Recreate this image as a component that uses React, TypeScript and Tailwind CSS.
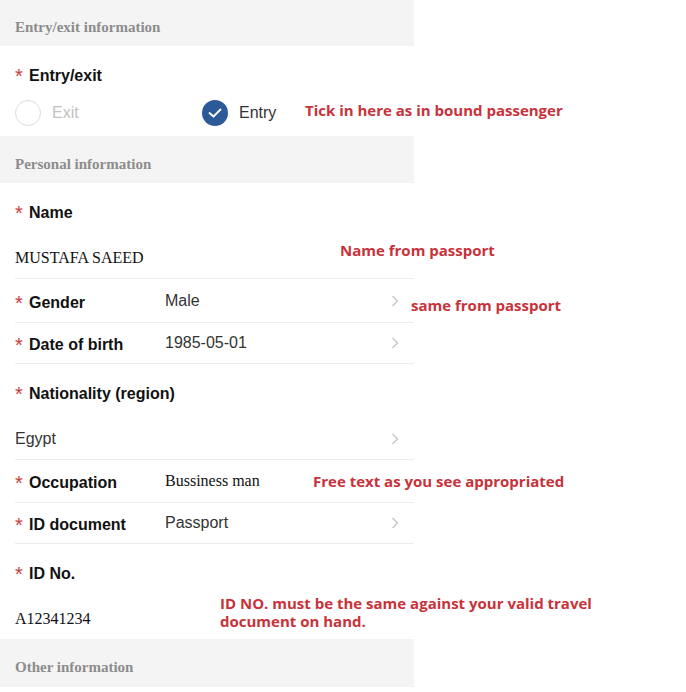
import type { ReactNode } from "react";

const sans = { fontFamily: '"Liberation Sans", Arial, sans-serif' };
const serif = { fontFamily: '"Liberation Serif", "Times New Roman", serif' };
const note = { fontFamily: '"Open Sans", "Noto Sans", sans-serif' };

function SectionHeader({ title, className = "h-[47px]" }: { title: string; className?: string }) {
  return (
    <div className={`flex items-center bg-[#f4f4f4] pl-[15px] pt-[9px] ${className}`}>
      <span style={serif} className="text-[15px] font-bold text-[#8c8c8c]">
        {title}
      </span>
    </div>
  );
}

function Label({ children }: { children: ReactNode }) {
  return (
    <div className="flex h-[22px] items-center text-[16px] font-bold leading-[22px] text-[#111]" style={sans}>
      <span className="w-[14px] translate-y-[1px] self-start text-[20px] font-normal leading-[20px] text-[#cc3b3b]">*</span>
      <span>{children}</span>
    </div>
  );
}

function Chevron() {
  return (
    <svg width="8" height="12" viewBox="0 0 8 12" className="shrink-0">
      <polyline points="1.5,1 6.5,6 1.5,11" fill="none" stroke="#c4c4c4" strokeWidth="1.3" />
    </svg>
  );
}

function InlineRow({ label, value, valueSerif, chevron, h = "h-[43px]" }: { label: string; value: string; valueSerif?: boolean; chevron?: boolean; h?: string }) {
  return (
    <div className={`ml-[15px] flex items-center border-b border-[#ececec] pr-[15px] ${h}`}>
      <div className="w-[150px] pt-[4px]">
        <Label>{label}</Label>
      </div>
      <div
        style={valueSerif ? serif : sans}
        className={`flex-1 ${valueSerif ? "text-[16px] text-[#111]" : "text-[16px] text-[#333]"}`}
      >
        {value}
      </div>
      {chevron ? <Chevron /> : null}
    </div>
  );
}

function StackedRow({ label, value, valueSerif, chevron, border = true }: { label: string; value: string; valueSerif?: boolean; chevron?: boolean; border?: boolean }) {
  return (
    <div className={`ml-[15px] flex flex-col pt-[19px] pr-[15px] pb-[9px] ${border ? "border-b border-[#ececec]" : ""}`}>
      <Label>{label}</Label>
      <div className="mt-[23px] flex h-[22px] items-center">
        <div
          style={valueSerif ? serif : sans}
          className={`flex-1 ${valueSerif ? "text-[16px] text-[#111]" : "text-[16px] text-[#333]"}`}
        >
          {value}
        </div>
        {chevron ? <Chevron /> : null}
      </div>
    </div>
  );
}

export default function App() {
  return (
    <div className="relative h-[692px] w-[686px] overflow-hidden bg-white">
      <div className="w-[414px]">
        <SectionHeader title="Entry/exit information" className="h-[46px]" />

        <div className="ml-[15px] flex h-[90px] flex-col pt-[19px]">
          <Label>Entry/exit</Label>
          <div className="mt-[13px] flex h-[26px] items-center" style={sans}>
            <div className="flex w-[187px] items-center gap-[11px]">
              <span className="h-[26px] w-[26px] rounded-full border border-[#dcdcdc] bg-white" />
              <span className="text-[16px] text-[#c2c2c2]">Exit</span>
            </div>
            <div className="flex items-center gap-[11px]">
              <span className="flex h-[26px] w-[26px] items-center justify-center rounded-full bg-[#2c5a98]">
                <svg width="14" height="10" viewBox="0 0 14 10">
                  <polyline points="1.5,5 5.5,8.5 12.5,1.5" fill="none" stroke="#fff" strokeWidth="1.8" strokeLinecap="round" strokeLinejoin="round" />
                </svg>
              </span>
              <span className="text-[16px] text-[#333]">Entry</span>
            </div>
          </div>
        </div>

        <SectionHeader title="Personal information" />

        <StackedRow label="Name" value="MUSTAFA SAEED" valueSerif />
        <InlineRow label="Gender" value="Male" chevron h="h-[44px]" />
        <InlineRow label="Date of birth" value="1985-05-01" chevron h="h-[41px]" />
        <StackedRow label="Nationality (region)" value="Egypt" chevron />
        <InlineRow label="Occupation" value="Bussiness man" valueSerif h="h-[43px]" />
        <InlineRow label="ID document" value="Passport" chevron h="h-[41px]" />
        <StackedRow label="ID No." value="A12341234" valueSerif border={false} />

        <SectionHeader title="Other information" className="h-[48px]" />
      </div>

      <div style={note} className="text-[15px] font-bold text-[#c8323a]">
        <p className="absolute left-[305px] top-[99px] leading-[22px]">Tick in here as in bound passenger</p>
        <p className="absolute left-[340px] top-[239px] leading-[22px]">Name from passport</p>
        <p className="absolute left-[411px] top-[294px] leading-[22px]">same from passport</p>
        <p className="absolute left-[313px] top-[470px] leading-[22px]">Free text as you see appropriated</p>
        <p className="absolute left-[220px] top-[594px] w-[400px] leading-[18px]">
          ID NO. must be the same against your valid travel document on hand.
        </p>
      </div>
    </div>
  );
}
